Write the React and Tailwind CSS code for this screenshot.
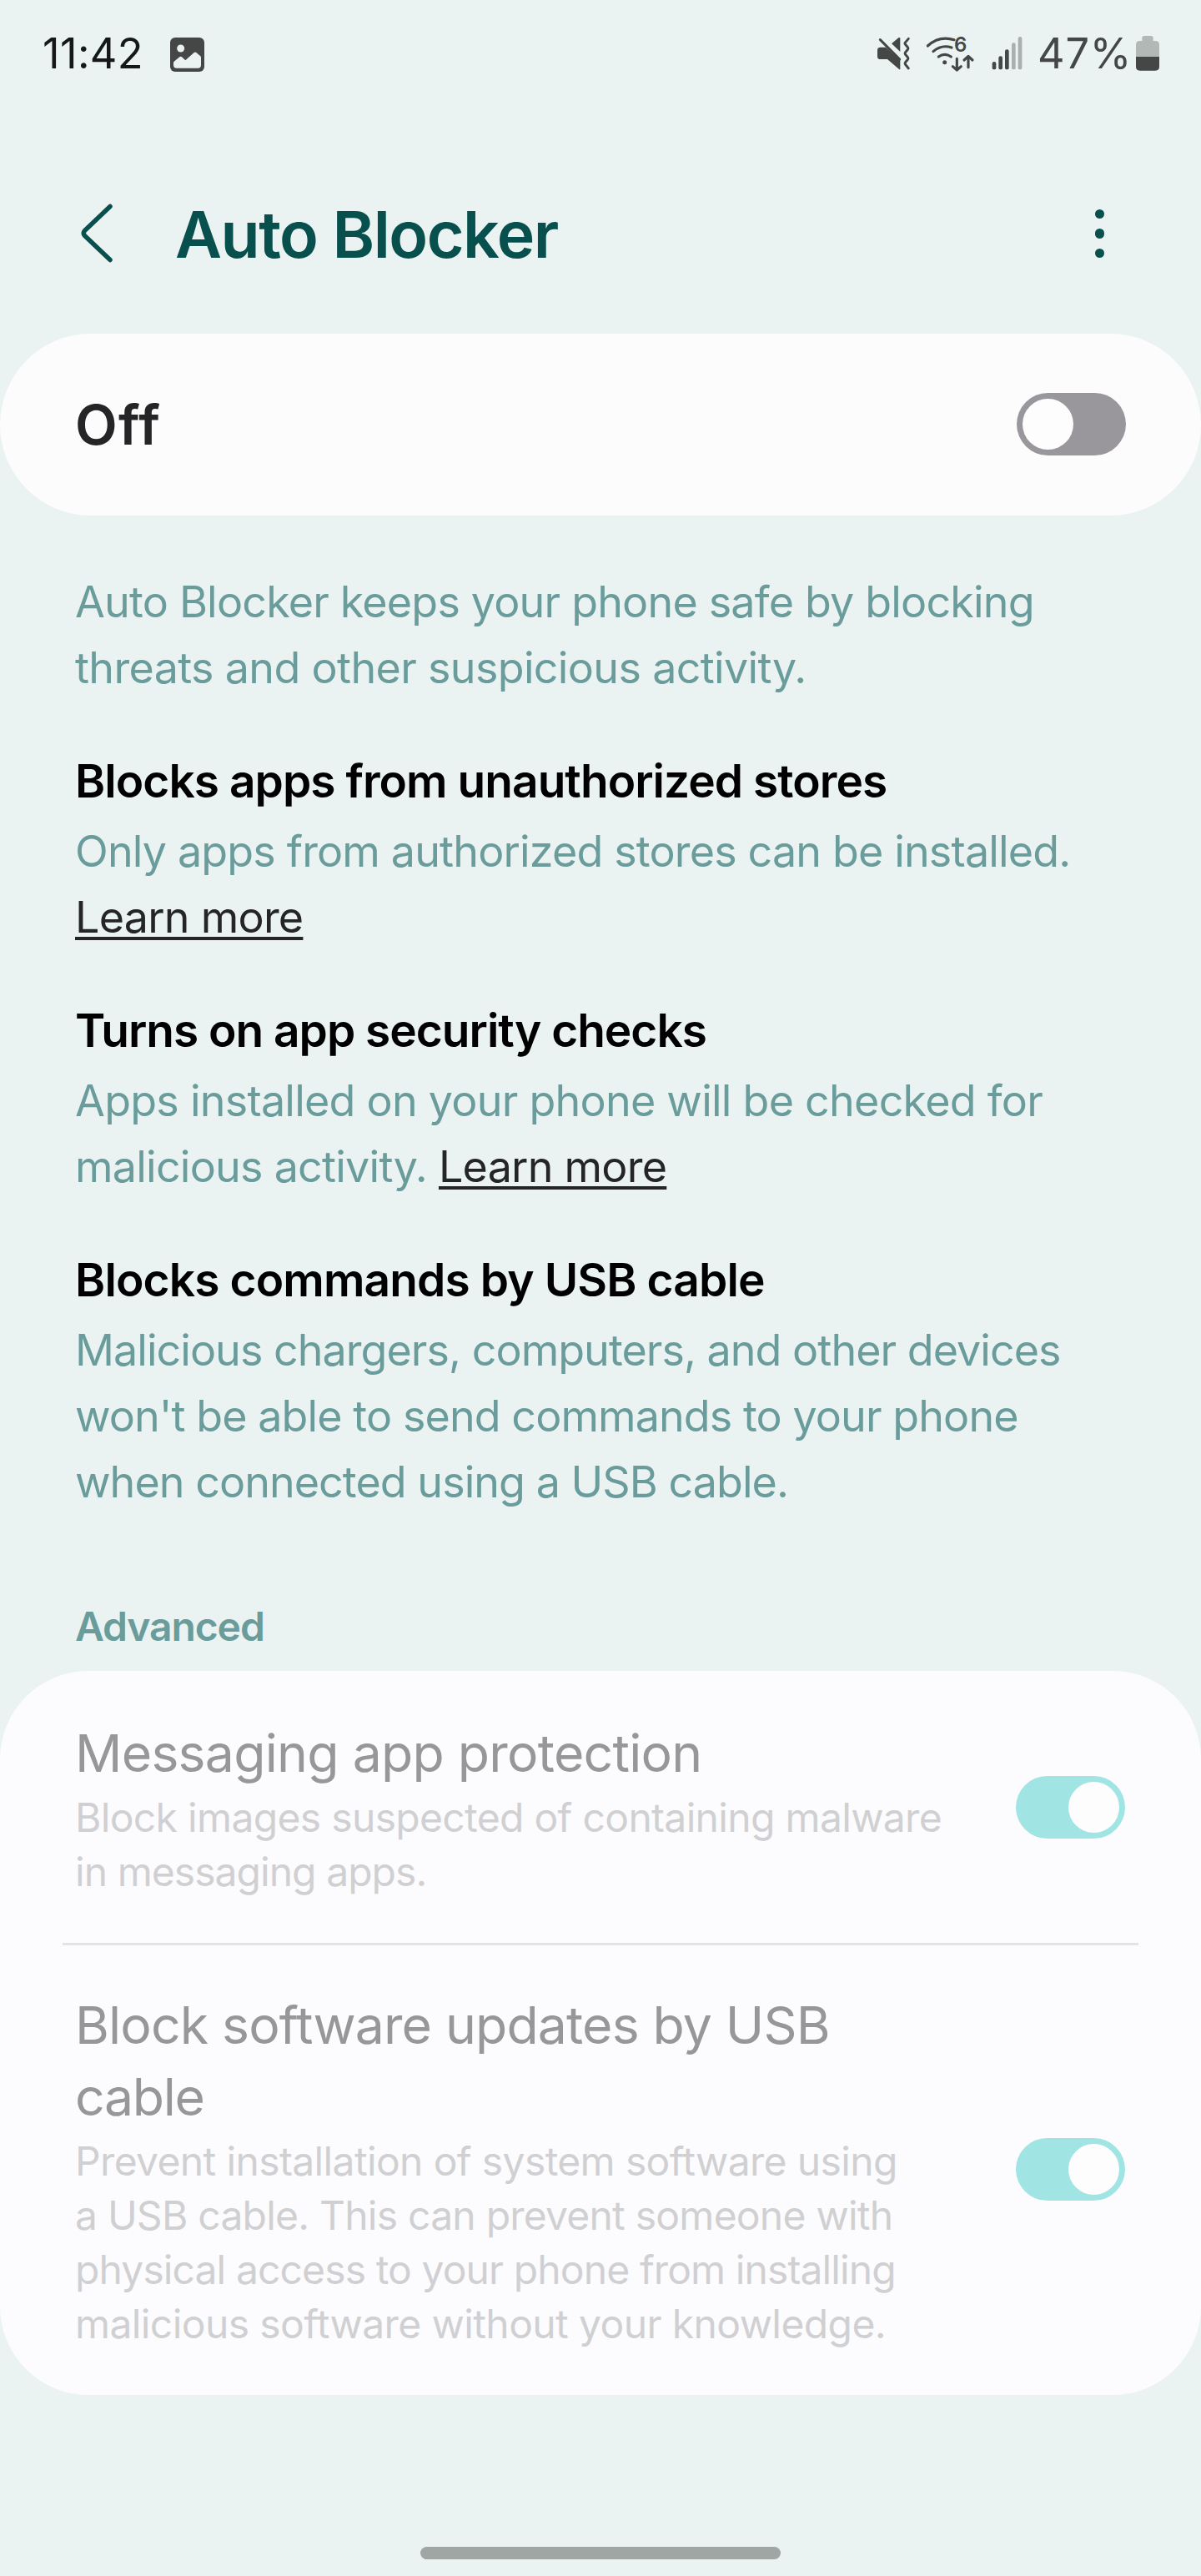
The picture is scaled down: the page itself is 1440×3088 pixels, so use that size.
// ==========================================
// Screen content
// ==========================================
const INTRO = [
  { text: "Auto Blocker keeps your phone safe by blocking", tracking: "tracking-[-0.81px]" },
  { text: "threats and other suspicious activity.", tracking: "tracking-[-0.66px]" },
];

const FEATURES = [
  {
    title: "Blocks apps from unauthorized stores",
    tracking: "tracking-[-0.95px]",
    lines: [
      { text: "Only apps from authorized stores can be installed.", tracking: "tracking-[-0.84px]" },
      { link: "Learn more", tracking: "tracking-[-0.75px]" },
    ],
  },
  {
    title: "Turns on app security checks",
    tracking: "tracking-[-1px]",
    lines: [
      { text: "Apps installed on your phone will be checked for", tracking: "tracking-[-0.75px]" },
      { text: "malicious activity. ", link: "Learn more", tracking: "tracking-[-0.76px]" },
    ],
  },
  {
    title: "Blocks commands by USB cable",
    tracking: "tracking-[-0.87px]",
    lines: [
      { text: "Malicious chargers, computers, and other devices", tracking: "tracking-[-0.96px]" },
      { text: "won't be able to send commands to your phone", tracking: "tracking-[-0.91px]" },
      { text: "when connected using a USB cable.", tracking: "tracking-[-0.95px]" },
    ],
  },
];

const ADVANCED = [
  {
    id: "messaging",
    padding: "pt-[55px] pb-[53px]",
    title: [{ text: "Messaging app protection", tracking: "tracking-[-0.76px]" }],
    summary: [
      { text: "Block images suspected of containing malware", tracking: "tracking-[-0.67px]" },
      { text: "in messaging apps.", tracking: "tracking-[-0.95px]" },
    ],
  },
  {
    id: "usb-updates",
    padding: "pt-[52px] pb-[53px]",
    title: [
      { text: "Block software updates by USB", tracking: "tracking-[-0.85px]" },
      { text: "cable", tracking: "tracking-[-1.3px]" },
    ],
    summary: [
      { text: "Prevent installation of system software using", tracking: "tracking-[-0.63px]" },
      { text: "a USB cable. This can prevent someone with", tracking: "tracking-[-0.77px]" },
      { text: "physical access to your phone from installing", tracking: "tracking-[-0.89px]" },
      { text: "malicious software without your knowledge.", tracking: "tracking-[-0.6px]" },
    ],
  },
];

// ==========================================
// Status bar icons
// ==========================================
function PictureIcon() {
  return (
    <svg width="41" height="41" viewBox="0 0 123 123" className="mt-[3px] ml-[33px] shrink-0">
      <rect width="123" height="123" rx="18" fill="#444745" />
      <circle cx="38" cy="39" r="13.5" fill="#eaf3f2" />
      <path
        d="M12 91 Q12 88 14 86 L34 70 Q38 67 42 70 L55 82 L86 54 Q90 51 94 54 L109 67 Q111 69 111 72 V99 Q111 110 100 110 H23 Q12 110 12 99 Z"
        fill="#eaf3f2"
      />
    </svg>
  );
}

function MuteIcon() {
  return (
    <svg width="42" height="44" viewBox="90 66 126 132" className="shrink-0" fill="#444745" stroke="#444745">
      <path
        d="M107 110 H126 L178 156 V188 Q177 191 174 189 L132 153 H107 Q96 153 96 143 V120 Q96 110 107 110 Z"
        stroke="none"
      />
      <path d="M178 79 V126 L147 97 L172 76 Q178 73 178 79 Z" stroke="none" />
      <path d="M106 83 L176 153" strokeWidth="9" strokeLinecap="round" />
      <path
        d="M208 79 L195 94 Q194 97 196 99 L206 111 Q208 114 206 117 L196 129 Q194 132 196 135 L206 147 Q208 150 206 153 L196 165 Q194 168 196 171 L208 186"
        fill="none"
        strokeWidth="8.5"
        strokeLinecap="round"
        strokeLinejoin="round"
      />
    </svg>
  );
}

function WifiIcon() {
  return (
    <svg
      width="58"
      height="44"
      viewBox="270 66 174 132"
      className="ml-[18px] shrink-0 overflow-visible"
      fill="none"
      stroke="#444745"
      strokeWidth="9.5"
    >
      <path d="M277 105 Q318 67 372 83" strokeLinecap="round" />
      <path d="M297 125 Q327 99 363 111" strokeLinecap="round" />
      <path d="M316 144 Q338 128 361 144" strokeLinecap="round" />
      <circle cx="338" cy="164" r="7.5" fill="#444745" stroke="none" />
      <text x="372" y="125" fill="#444745" stroke="none" className="font-[Inter] text-[72px] font-semibold">
        6
      </text>
      <path d="M382 151 V190 M367 179 L382 192 L397 179" strokeLinecap="round" strokeLinejoin="round" />
      <path d="M423 182 V144 M408 156 L423 142 L438 156" strokeLinecap="round" strokeLinejoin="round" />
    </svg>
  );
}

function SignalIcon() {
  return (
    <svg width="37" height="44" viewBox="507 66 111 132" className="ml-[21px] shrink-0">
      <rect x="509" y="162" width="14" height="28" rx="6.5" fill="#444745" />
      <rect x="532" y="142" width="14" height="48" rx="6.5" fill="#444745" />
      <rect x="555" y="118" width="14" height="72" rx="6.5" fill="#444745" />
      <rect x="579" y="94" width="14" height="96" rx="6.5" fill="#aab0ae" />
      <rect x="602" y="72" width="14" height="118" rx="6.5" fill="#aab0ae" />
    </svg>
  );
}

function BatteryIcon() {
  return (
    <svg width="28" height="44" viewBox="1026 66 84 132" className="shrink-0">
      <path
        d="M1048 87 V77 Q1048 69 1056 69 H1080 Q1088 69 1088 77 V87 H1096 Q1110 87 1110 101 V144 H1026 V101 Q1026 87 1040 87 Z"
        fill="#b2b8b6"
      />
      <path d="M1026 144 H1110 V180 Q1110 194 1096 194 H1040 Q1026 194 1026 180 Z" fill="#444745" />
    </svg>
  );
}

function StatusBar() {
  return (
    <div className="flex h-[128px] items-center pl-[51px] pr-[50px] text-[50.5px] leading-[60px]">
      <span className="w-[120px] whitespace-nowrap tracking-[0.4px] text-[#161817]">11:42</span>
      <PictureIcon />
      <div className="ml-auto flex items-center">
        <MuteIcon />
        <WifiIcon />
        <SignalIcon />
        <span className="ml-[18px] w-[118px] whitespace-nowrap tracking-[0.8px] text-[#444745]">47%</span>
        <BatteryIcon />
      </div>
    </div>
  );
}

// ==========================================
// Building blocks
// ==========================================
function Toggle({ on }) {
  return (
    <div
      role="switch"
      aria-checked={on}
      className={`mb-[2px] flex h-[75px] w-[131px] shrink-0 items-center rounded-full px-[7px] ${
        on ? "justify-end bg-[#a0e4e4]" : "justify-start bg-[#99979c]"
      }`}
    >
      <span className="size-[61px] rounded-full bg-[#fdfdfd]" />
    </div>
  );
}

function TextLine({ text, link, tracking }) {
  return (
    <span className={`block whitespace-nowrap ${tracking}`}>
      {text}
      {link && (
        <a className="text-[#252528] underline decoration-[4px] underline-offset-[5px] [text-decoration-skip-ink:none]">{link}</a>
      )}
    </span>
  );
}

function AdvancedRow({ title, summary, padding }) {
  return (
    <div className={`flex items-center justify-between pl-[90px] pr-[91px] ${padding}`}>
      <div>
        <h3 className="text-[62.5px] leading-[86px] text-[#979799]">
          {title.map((line) => (
            <TextLine key={line.text} {...line} />
          ))}
        </h3>
        <p className="mt-[2px] text-[48px] leading-[65px] text-[#d0d0d3]">
          {summary.map((line) => (
            <TextLine key={line.text} {...line} />
          ))}
        </p>
      </div>
      <Toggle on />
    </div>
  );
}

export default function App() {
  return (
    <div className="flex h-[3088px] w-[1440px] flex-col overflow-hidden bg-[#eaf3f2] font-[Inter,Roboto,sans-serif]">
      <StatusBar />

      {/* App bar */}
      <header className="mt-[107px] flex h-[92px] items-center pl-[94px] pr-[116px]">
        <svg
          width="44"
          height="72"
          viewBox="0 0 44 72"
          fill="none"
          stroke="#08504e"
          strokeWidth="5.5"
          strokeLinecap="round"
          strokeLinejoin="round"
          className="mb-[2px]"
        >
          <path d="M38 3.5 L7.5 32.5 Q5 35.5 7.5 38.5 L38 67.5" />
        </svg>
        <h1 className="ml-[72px] text-[77px] font-semibold leading-[92px] tracking-[-1.5px] text-[#08504e]">Auto Blocker</h1>
        <div className="mb-[2px] ml-auto flex flex-col gap-[12px]">
          <span className="size-[11.5px] rounded-full bg-[#08504e]" />
          <span className="size-[11.5px] rounded-full bg-[#08504e]" />
          <span className="size-[11.5px] rounded-full bg-[#08504e]" />
        </div>
      </header>

      {/* Main switch */}
      <section className="mt-[73px] flex h-[218px] items-center justify-between rounded-full bg-[#fcfcfc] pl-[90px] pr-[90px]">
        <span className="text-[66px] font-semibold leading-[80px] tracking-[1.3px] text-[#252527]">Off</span>
        <Toggle on={false} />
      </section>

      {/* What the feature does */}
      <section className="mt-[64px] flex flex-col gap-[63px] pl-[90px] text-[52px] leading-[79px] text-[#699c9b]">
        <p>
          {INTRO.map((line) => (
            <TextLine key={line.text} {...line} />
          ))}
        </p>
        {FEATURES.map((feature) => (
          <div key={feature.title}>
            <h2 className={`mb-[12px] whitespace-nowrap text-[55px] font-semibold leading-[66px] text-black ${feature.tracking}`}>
              {feature.title}
            </h2>
            <p>
              {feature.lines.map((line, i) => (
                <TextLine key={i} {...line} />
              ))}
            </p>
          </div>
        ))}
      </section>

      {/* Advanced */}
      <h2 className="mt-[102px] mb-[21px] pl-[90px] text-[48px] font-semibold leading-[64px] tracking-[-1.1px] text-[#699c9b]">
        Advanced
      </h2>
      <section className="rounded-[106px] bg-[#fcfcfe]">
        {ADVANCED.map((row, i) => (
          <div key={row.id}>
            {i > 0 && <div className="mx-[75px] h-[3px] bg-[#e3e3e5]" />}
            <AdvancedRow {...row} />
          </div>
        ))}
      </section>

      {/* Gesture bar */}
      <div className="mx-auto mt-auto mb-[20px] h-[15px] w-[432px] shrink-0 rounded-full bg-[#a0a6a4]" />
    </div>
  );
}
